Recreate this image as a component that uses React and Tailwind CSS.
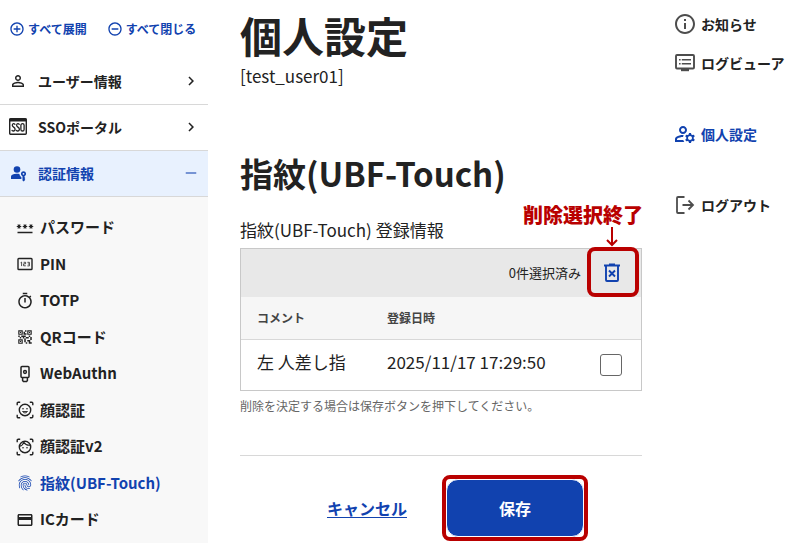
import React from "react";
import {
  MdAddCircleOutline,
  MdRemoveCircleOutline,
  MdPersonOutline,
  MdChevronRight,
  MdRemove,
  MdPassword,
  MdOutlineTimer,
  MdQrCode2,
  MdFingerprint,
  MdCreditCard,
  MdInfoOutline,
  MdOutlineManageAccounts,
} from "react-icons/md";

function SsoIcon() {
  return (
    <svg viewBox="0 0 18 17" className="h-[17px] w-[18px]" aria-hidden="true">
      <rect x="0.7" y="0.7" width="16.6" height="15.6" rx="1" fill="none" stroke="currentColor" strokeWidth="1.4" />
      <path d="M0.5 0.5h17v3H0.5z" fill="currentColor" />
      <g fill="none" stroke="currentColor" strokeWidth="1.3">
        <path d="M6.200 6.800C5.600 5 3.300 5.200 3.300 7.200S6.100 9 6.100 11.200 3.300 13.600 2.800 11.800" />
        <path d="M10.500 6.800C9.900 5 7.600 5.200 7.600 7.200S10.400 9 10.400 11.200 7.600 13.600 7.100 11.800" />
        <rect x="11.900" y="5.700" width="3.200" height="7.300" rx="1.600" />
      </g>
    </svg>
  );
}

function PersonKeyIcon() {
  return (
    <svg viewBox="0 0 18 18" className="size-[18px]" fill="currentColor" aria-hidden="true">
      <circle cx="8" cy="5.500" r="3.300" />
      <path d="M2 15v-2.200C2 10.500 5.500 9.800 8 9.800c.8 0 1.600.1 2.400.3.200 1.400.8 2.400 2 3.100V15z" />
      <path fillRule="evenodd" d="M14.500 7.200a2.600 2.600 0 0 1 1 5v1l.8.8-.8.9.8.9-1.600 1.700-1.200-1v-4.300a2.600 2.600 0 0 1 1-5zm0 1.700a.9.9 0 1 0 0 1.800.9.9 0 0 0 0-1.800z" />
    </svg>
  );
}

function PinIcon() {
  return (
    <svg viewBox="0 0 16 16" className="size-4" fill="none" stroke="currentColor" aria-hidden="true">
      <rect x="1" y="2.500" width="14" height="11" rx="0.800" strokeWidth="1.400" />
      <path d="M3.600 6.700l1-.6v4M6.600 6.300h2v1.500h-2v2h2.200M10.400 6.300h2v3.600h-2M10.800 8h1.600" strokeWidth="0.800" />
    </svg>
  );
}

function UsbKeyIcon() {
  return (
    <svg viewBox="0 0 16 18" className="h-[18px] w-4" fill="none" stroke="currentColor" strokeWidth="1.500" aria-hidden="true">
      <rect x="4" y="1.500" width="8" height="11" rx="1" />
      <path d="M5.600 12.500v3l.8.9h3.200l.8-.9v-3" />
      <circle cx="8" cy="7" r="1.400" />
    </svg>
  );
}

function FaceIcon({ hair = false }) {
  return (
    <svg viewBox="0 0 18 18" className="size-[18px]" fill="none" stroke="currentColor" strokeWidth="1.400" aria-hidden="true">
      <path d="M1.200 4.200V2.200a1 1 0 0 1 1-1h2M13.800 1.200h2a1 1 0 0 1 1 1v2M16.800 13.800v2a1 1 0 0 1-1 1h-2M4.200 16.800h-2a1 1 0 0 1-1-1v-2" />
      <circle cx="9" cy="9" r="5.700" />
      <circle cx="7" cy={hair ? 9.8 : 7.8} r="0.800" fill="currentColor" stroke="none" />
      <circle cx="11" cy={hair ? 9.8 : 7.8} r="0.800" fill="currentColor" stroke="none" />
      {hair ? (
        <path d="M3.800 8.200C5.800 7.800 7 6.600 7.800 4.400c1.300 2.100 3.400 3 6.300 2.800" strokeWidth="1.200" />
      ) : (
        <path d="M6.500 10.500c1 1.900 4 1.900 5 0z" strokeWidth="0.900" />
      )}
    </svg>
  );
}

function LogViewerIcon() {
  return (
    <svg viewBox="0 0 20 20" className="size-5" fill="none" stroke="currentColor" aria-hidden="true">
      <rect x="1" y="2" width="18" height="13.500" rx="1" strokeWidth="1.900" />
      <path d="M4 6.700h1.600M6.800 6.700H16M4 10.800h1.600M6.800 10.800H16" strokeWidth="1.600" />
      <path d="M6 16h8v2.200H6z" fill="currentColor" stroke="none" />
    </svg>
  );
}

function LogoutIcon() {
  return (
    <svg viewBox="0 0 20 20" className="size-5" fill="none" stroke="currentColor" strokeWidth="1.800" aria-hidden="true">
      <path d="M9.500 2H3a1 1 0 0 0-1 1v14a1 1 0 0 0 1 1h6.500M7.500 10h10M13.500 5.500L18 10l-4.500 4.500" />
    </svg>
  );
}

function TrashIcon() {
  return (
    <svg viewBox="0 0 18 20" className="h-5 w-[18px]" fill="none" stroke="currentColor" strokeWidth="1.900" aria-hidden="true">
      <path d="M1 2.500h16M6 1.500h6M3 2.500V17a1 1 0 0 0 1 1h10a1 1 0 0 0 1-1V2.500M6 7.500l6 6M12 7.500l-6 6" />
    </svg>
  );
}

const groups = [
  { label: "ユーザー情報", icon: <MdPersonOutline className="size-[18px]" /> },
  { label: "SSOポータル", icon: <SsoIcon /> },
  { label: "認証情報", icon: <PersonKeyIcon />, open: true },
];

const methods = [
  { label: "パスワード", icon: <MdPassword className="size-[18px]" /> },
  { label: "PIN", icon: <PinIcon /> },
  { label: "TOTP", icon: <MdOutlineTimer className="size-[18px]" /> },
  { label: "QRコード", icon: <MdQrCode2 className="size-[18px]" /> },
  { label: "WebAuthn", icon: <UsbKeyIcon /> },
  { label: "顔認証", icon: <FaceIcon /> },
  { label: "顔認証v2", icon: <FaceIcon hair /> },
  { label: "指紋(UBF-Touch)", icon: <MdFingerprint className="size-[18px]" />, active: true },
  { label: "ICカード", icon: <MdCreditCard className="size-[18px]" /> },
];

function Sidebar() {
  return (
    <aside className="w-52 shrink-0 bg-[#f8f8f8]">
      <div className="bg-white">
        <div className="flex h-[59px] items-center gap-5 pb-0.5 pl-[9px] text-xs font-semibold text-[#1142af]">
          <button type="button" className="flex items-center gap-[3px] whitespace-nowrap">
            <MdAddCircleOutline className="size-4" />
            すべて展開
          </button>
          <button type="button" className="flex items-center gap-[3px] whitespace-nowrap">
            <MdRemoveCircleOutline className="size-4" />
            すべて閉じる
          </button>
        </div>
        {groups.map((g) => (
          <button
            key={g.label}
            type="button"
            aria-expanded={!!g.open}
            className={`flex h-[46px] w-full items-center border-b border-[#d8d8d8] pr-2 pb-0.5 pl-[9px] text-sm font-semibold ${g.open ? "bg-[#e8f1fe] text-[#1142af]" : ""}`}
          >
            <span className="flex w-[29px]">{g.icon}</span>
            <span className="grow text-left">{g.label}</span>
            {g.open ? <MdRemove className="size-[18px] opacity-70" /> : <MdChevronRight className="size-[18px]" />}
          </button>
        ))}
      </div>
      <nav className="pt-3">
        {methods.map((m) => (
          <a
            key={m.label}
            href="#"
            className={`flex items-center pl-4 text-[15px] font-semibold odd:h-[37px] even:h-9 ${m.active ? "text-[#1142af]" : ""}`}
          >
            <span className="flex w-[18px] justify-center">{m.icon}</span>
            <span className="pl-1.5">{m.label}</span>
          </a>
        ))}
      </nav>
    </aside>
  );
}

function NavLink({ icon, children, active = false }) {
  return (
    <a href="#" className={`flex h-[39px] items-center gap-1.5 text-sm font-semibold whitespace-nowrap ${active ? "text-[#1142af]" : ""}`}>
      <span className={`flex w-[21px] shrink-0 justify-center ${active ? "" : "text-[#4d4d4d]"}`}>{icon}</span>
      {children}
    </a>
  );
}

export default function App() {
  return (
    <div className="flex h-screen overflow-hidden bg-white font-['Noto_Sans_CJK_JP',sans-serif] text-[#222]">
      <Sidebar />
      <main className="min-w-0 grow px-8 pt-[5px]">
        <h1 className="text-[42px] leading-[60px] font-bold">個人設定</h1>
        <p className="text-[17px] leading-[22px]">[test_user01]</p>
        <h2 className="mt-[62px] text-[33px] leading-[48px] font-semibold">指紋(UBF-Touch)</h2>
        <p id="list-title" className="mt-[21px] text-[17px] leading-6">指紋(UBF-Touch) 登録情報</p>
        <section className="mt-1.5 border border-[#c8c8c8]">
          <div className="relative flex h-12 items-center justify-end gap-[7px] bg-[#e8e8e8] pr-[5px]">
            <span className="text-[13px]">0件選択済み</span>
            <button type="button" aria-label="削除選択終了" className="flex size-12 items-center justify-center text-[#1142af]">
              <TrashIcon />
            </button>
            <div className="pointer-events-none absolute -top-0.5 right-0.5 h-[50px] w-[52px] rounded-lg border-4 border-[#b90000]" />
            <div className="pointer-events-none absolute -right-0.5 bottom-full mb-0.5 flex w-[120px] flex-col items-center text-[#b90000]">
              <span className="text-xl leading-6 font-black whitespace-nowrap">削除選択終了</span>
              <svg viewBox="0 0 12 20" className="ml-[58px] h-5 w-3" fill="none" stroke="currentColor" strokeWidth="2" aria-hidden="true">
                <path d="M6 0v18M1 13l5 5 5-5" />
              </svg>
            </div>
          </div>
          <table className="w-full table-fixed text-left" aria-labelledby="list-title">
            <thead>
              <tr className="h-[42px] border-b border-[#d8d8d8] bg-[#f6f6f6] text-xs text-[#444]">
                <th className="w-[130px] pl-4 font-semibold">コメント</th>
                <th className="pl-4 font-semibold">登録日時</th>
                <th className="w-16" aria-label="選択" />
              </tr>
            </thead>
            <tbody>
              <tr className="h-[51px] text-[17px]">
                <td className="pb-1.5 pl-4">左 人差し指</td>
                <td className="pb-1.5 pl-4">2025/11/17 17:29:50</td>
                <td>
                  <input type="checkbox" aria-label="左 人差し指" className="ml-[23px] block size-[22px] appearance-none rounded-[3px] border border-[#666] bg-white checked:bg-[#1142af]" />
                </td>
              </tr>
            </tbody>
          </table>
        </section>
        <p className="mt-[7px] text-xs leading-4 text-[#666]">削除を決定する場合は保存ボタンを押下してください。</p>
        <div className="mt-[41px] flex items-center justify-end gap-[35px] border-t border-[#d8d8d8] pt-[19px] pr-[54px]">
          <a href="#" className="font-semibold text-[#1142af] underline underline-offset-2">キャンセル</a>
          <div className="rounded-lg border-4 border-[#b90000]">
            <button type="button" className="block h-[58px] w-[138px] rounded-xl border border-white bg-[#1142af] text-base font-bold text-white">保存</button>
          </div>
        </div>
      </main>
      <nav className="w-[114px] shrink-0 pt-1">
        <NavLink icon={<MdInfoOutline className="size-6 shrink-0" />}>お知らせ</NavLink>
        <NavLink icon={<LogViewerIcon />}>ログビューア</NavLink>
        <div className="mt-8">
          <NavLink active icon={<MdOutlineManageAccounts className="size-6 shrink-0" />}>個人設定</NavLink>
        </div>
        <div className="mt-8">
          <NavLink icon={<LogoutIcon />}>ログアウト</NavLink>
        </div>
      </nav>
    </div>
  );
}
